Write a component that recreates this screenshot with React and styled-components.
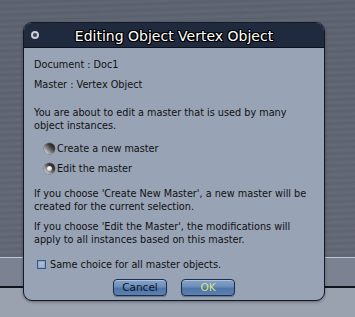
import React, { useState } from 'react';
import styled, { createGlobalStyle } from 'styled-components';

const GlobalStyle = createGlobalStyle`
  html, body {
    margin: 0;
    padding: 0;
    width: 355px;
    height: 317px;
    overflow: hidden;
  }
  body {
    font-family: "DejaVu Sans", "Liberation Sans", sans-serif;
  }
`;

const Desktop = styled.div`
  position: relative;
  width: 355px;
  height: 317px;
  display: flex;
  flex-direction: column;
  overflow: hidden;
`;

const BackTop = styled.div`
  height: 257px;
  background:
    repeating-linear-gradient(
      178deg,
      rgba(255, 255, 255, 0.03) 0px,
      rgba(0, 0, 0, 0.04) 3px,
      rgba(255, 255, 255, 0.02) 6px
    ),
    linear-gradient(180deg, #5e6371 0%, #636876 100%);
`;

const BackStrip = styled.div`
  height: 28px;
  background: #7b8393;
  border-top: 1px solid #bcc6d6;
  border-bottom: 2px solid #10141c;
`;

const BackBottom = styled.div`
  flex: 1;
  background: #9aa1af;
`;

const Dialog = styled.div`
  position: absolute;
  left: 23px;
  top: 22px;
  width: 300px;
  height: 277px;
  display: flex;
  flex-direction: column;
  background: #98a3b5;
  border: 1px solid #131a26;
  border-radius: 9px;
  overflow: hidden;
  box-shadow: 0 1px 3px rgba(0, 0, 0, 0.35);
`;

const TitleBar = styled.div`
  position: relative;
  height: 24px;
  flex: none;
  display: flex;
  align-items: center;
  justify-content: center;
  background: #1f2a3e;
  border-bottom: 1px solid #0c111b;
`;

const CloseDot = styled.span`
  position: absolute;
  left: 7px;
  top: 8px;
  width: 4px;
  height: 4px;
  border-radius: 50%;
  background: #3a4458;
  border: 2px solid #c9ced8;
`;

const Title = styled.div`
  color: #ffffff;
  font-size: 14px;
  padding-top: 1px;
  text-shadow:
    -1px 0 0 #000, 1px 0 0 #000, 0 -1px 0 #000, 0 1px 0 #000,
    -1px -1px 0 #000, 1px 1px 0 #000, -1px 1px 0 #000, 1px -1px 0 #000;
`;

const Body = styled.div`
  flex: 1;
  display: flex;
  flex-direction: column;
  padding: 10px 10px 0 10px;
  color: #111;
  font-size: 9.7px;
  line-height: 13px;
`;

const Line = styled.p`
  margin: 0 0 ${p => p.$gap ?? 7}px 0;
  white-space: nowrap;
`;

const RadioRow = styled.label`
  display: flex;
  align-items: center;
  gap: 2px;
  margin: 0 0 ${p => p.$gap ?? 7}px 10px;
  height: 13px;
`;

const RadioBall = styled.span`
  position: relative;
  width: 11px;
  height: 11px;
  border-radius: 50%;
  background: linear-gradient(45deg, #f0f0f0 0%, #a0a0a0 30%, #3a3a3a 65%, #151515 100%);
  box-shadow: 0 0 0 0.5px rgba(0, 0, 0, 0.35);

  &::after {
    content: '';
    display: ${p => (p.$checked ? 'block' : 'none')};
    position: absolute;
    left: 3px;
    top: 3px;
    width: 5px;
    height: 5px;
    border-radius: 50%;
    background: radial-gradient(circle at 40% 40%, #fff 0%, #d8d8d8 60%, #7a7a7a 100%);
  }
`;

const CheckRow = styled.label`
  display: flex;
  align-items: center;
  gap: 4px;
  margin: 12px 0 0 3px;
  height: 13px;
`;

const CheckBox = styled.span`
  width: 7px;
  height: 7px;
  border: 1px solid #2d5a94;
  background: linear-gradient(180deg, #b7c1cf 0%, #a5b0c0 100%);
  box-shadow: inset 0 0 0 1px #8fa4c4;
`;

const Buttons = styled.div`
  display: flex;
  justify-content: center;
  gap: 14px;
  margin-top: 8px;
`;

const Button = styled.button`
  width: 54px;
  height: 17px;
  padding: 0;
  border: 1px solid #1b2d4a;
  border-radius: 4px;
  background: linear-gradient(180deg, #86a3c8 0%, #6b8ebb 45%, #4f74a6 55%, #5b80b2 100%);
  box-shadow: inset 0 1px 0 rgba(255, 255, 255, 0.35), 0 1px 1px rgba(0, 0, 0, 0.3);
  color: ${p => (p.$primary ? '#d9e27a' : '#0d1420')};
  font-family: "DejaVu Sans", "Liberation Sans", sans-serif;
  font-size: 10.5px;
  line-height: 15px;
`;

export default function App() {
  const [mode, setMode] = useState('edit');

  return (
    <>
      <GlobalStyle />
      <Desktop>
        <BackTop />
        <BackStrip />
        <BackBottom />
        <Dialog>
          <TitleBar>
            <CloseDot />
            <Title>Editing Object Vertex Object</Title>
          </TitleBar>
          <Body>
            <Line>Document : Doc1</Line>
            <Line $gap={15}>Master : Vertex Object</Line>
            <Line $gap={10}>
              You are about to edit a master that is used by many
              <br />
              object instances.
            </Line>
            <RadioRow onClick={() => setMode('create')}>
              <RadioBall $checked={mode === 'create'} />
              Create a new master
            </RadioRow>
            <RadioRow $gap={12} onClick={() => setMode('edit')}>
              <RadioBall $checked={mode === 'edit'} />
              Edit the master
            </RadioRow>
            <Line $gap={7}>
              If you choose 'Create New Master', a new master will be
              <br />
              created for the current selection.
            </Line>
            <Line $gap={0}>
              If you choose 'Edit the Master', the modifications will
              <br />
              apply to all instances based on this master.
            </Line>
            <CheckRow>
              <CheckBox />
              Same choice for all master objects.
            </CheckRow>
            <Buttons>
              <Button>Cancel</Button>
              <Button $primary>OK</Button>
            </Buttons>
          </Body>
        </Dialog>
      </Desktop>
    </>
  );
}
